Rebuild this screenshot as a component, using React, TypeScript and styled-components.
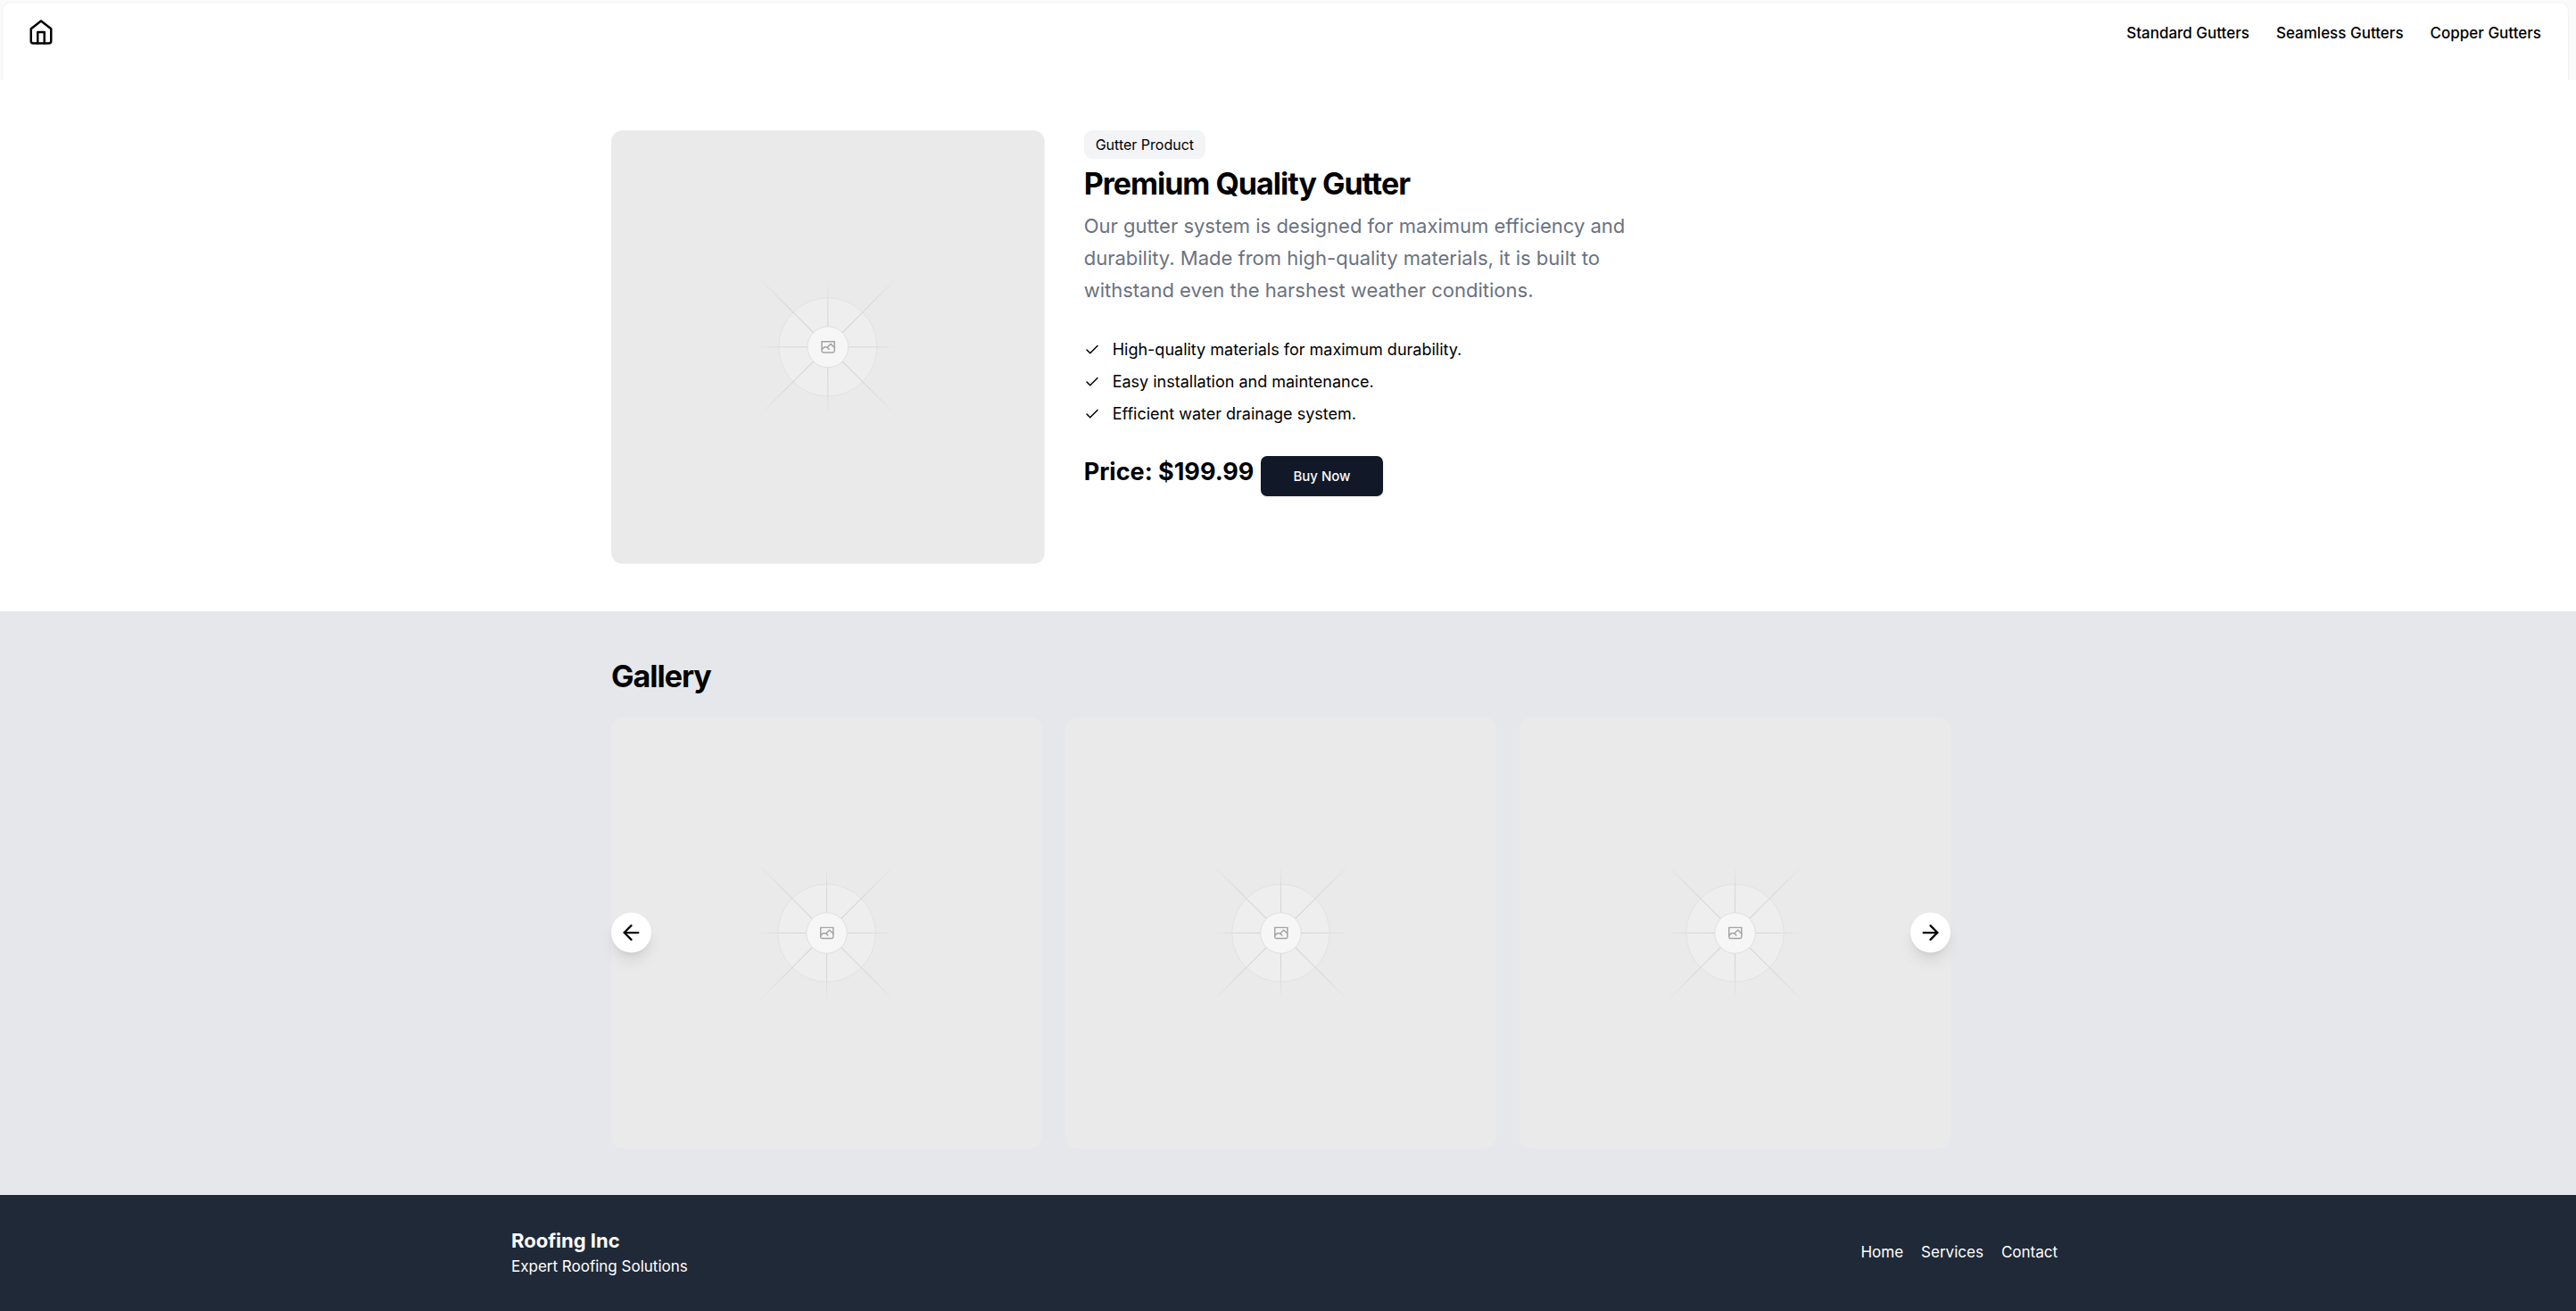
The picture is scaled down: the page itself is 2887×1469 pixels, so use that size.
import React, { useId } from "react";
import styled, { createGlobalStyle } from "styled-components";
import { ArrowLeft, ArrowRight, Check } from "lucide-react";

const GlobalStyle = createGlobalStyle`
  *, *::before, *::after { box-sizing: border-box; }
  body {
    margin: 0;
    background: #ffffff;
    color: #000000;
    font-family: Inter, "Liberation Sans", sans-serif;
    font-size: 18px;
    line-height: 27px;
  }
  h1, h2, h3, p, ul { margin: 0; padding: 0; }
  ul { list-style: none; }
  a { color: inherit; text-decoration: none; }
`;

const Header = styled.header`
  padding: 2px 8px 0 2px;
  background: #fafafa;
`;

const NavCard = styled.nav`
  display: flex;
  align-items: flex-start;
  justify-content: space-between;
  min-height: 88px;
  padding: 18px 30px 18px 28px;
  border: 1px solid #f1f1f1;
  border-bottom: 0;
  border-radius: 10px 10px 0 0;
  background: #ffffff;
`;

const HomeLink = styled.a`
  display: flex;
  svg { display: block; }
`;

const NavLinks = styled.div`
  display: flex;
  gap: 30px;
  padding-top: 3px;
  font-size: 17px;
  font-weight: 500;
`;

const Section = styled.section<{ $tinted?: boolean }>`
  padding: ${(p) => (p.$tinted ? "53px 16px 52px 0" : "56px 16px 53px 0")};
  background: ${(p) => (p.$tinted ? "#e5e7eb" : "#ffffff")};
`;

const Container = styled.div`
  max-width: 1501px;
  margin: 0 auto;
`;

const HeroGrid = styled(Container)`
  display: grid;
  grid-template-columns: 1fr 2fr;
  gap: 44px;
`;

const Picture = styled.svg`
  display: block;
  width: 100%;
  aspect-ratio: 1;
  border-radius: 13px;
`;

const Details = styled.div`
  display: flex;
  flex-direction: column;
  align-items: flex-start;
`;

const Badge = styled.span`
  padding: 4px 13px;
  border-radius: 9px;
  background: #f3f4f6;
  font-size: 16px;
  line-height: 24px;
`;

const Title = styled.h1`
  margin: 9px 0 11px;
  font-size: 34px;
  line-height: 37px;
  font-weight: 700;
  letter-spacing: -1px;
`;

const GalleryTitle = styled.h2`
  margin-bottom: 26px;
  font-size: 34px;
  line-height: 40px;
  font-weight: 700;
  letter-spacing: -1px;
`;

const Lead = styled.p`
  max-width: 667px;
  color: #6b7280;
  font-size: 22px;
  line-height: 36px;
`;

const Features = styled.ul`
  display: grid;
  gap: 9px;
  margin: 35px 0 34px;
`;

const Feature = styled.li`
  display: flex;
  align-items: center;
  gap: 14px;
`;

const Purchase = styled.div`
  display: flex;
  align-items: flex-start;
  gap: 8px;
`;

const Price = styled.p`
  font-size: 27px;
  line-height: 36px;
  font-weight: 700;
`;

const BuyButton = styled.button`
  height: 45px;
  padding: 0 36px;
  border: 0;
  border-radius: 7px;
  background: #111827;
  color: #f9fafb;
  box-shadow: 0 1px 2px rgba(0, 0, 0, 0.12);
  font: 500 15px/24px Inter, "Liberation Sans", sans-serif;
`;

const Carousel = styled.div`
  position: relative;
`;

const Slides = styled.div`
  display: grid;
  grid-template-columns: repeat(3, 1fr);
  gap: 26px;
`;

const ArrowButton = styled.button<{ $side: "left" | "right" }>`
  position: absolute;
  top: 50%;
  ${(p) => p.$side}: 0;
  display: grid;
  place-items: center;
  width: 45px;
  height: 45px;
  padding: 0;
  border: 0;
  border-radius: 50%;
  background: #ffffff;
  color: #000000;
  transform: translateY(-50%);
  box-shadow: 0 11px 17px -3px rgba(0, 0, 0, 0.1), 0 4px 7px -4px rgba(0, 0, 0, 0.1);
`;

const Footer = styled.footer`
  padding: 36px 8px 36px 0;
  background: #1f2937;
  color: #ffffff;
  font-size: 17px;
`;

const FooterRow = styled.div`
  display: flex;
  align-items: center;
  justify-content: space-between;
  max-width: 1733px;
  margin: 0 auto;
`;

const Company = styled.h3`
  font-size: 22px;
  line-height: 31px;
  font-weight: 700;
`;

const FooterLinks = styled.nav`
  display: flex;
  gap: 20px;
`;

const RAYS = [0, 45, 90, 135, 180, 225, 270, 315];

function Placeholder({ label }: { label: string }) {
  const id = useId();
  return (
    <Picture viewBox="0 0 1200 1200" role="img" aria-label={label}>
      <defs>
        <linearGradient id={`${id}s`} gradientUnits="userSpaceOnUse" x1="56" y1="0" x2="188" y2="0">
          <stop offset="0" stopColor="#c9c9c9" stopOpacity="0.75" />
          <stop offset="0.5" stopColor="#c9c9c9" stopOpacity="0.6" />
          <stop offset="1" stopColor="#c9c9c9" stopOpacity="0" />
        </linearGradient>
        <linearGradient id={`${id}l`} gradientUnits="userSpaceOnUse" x1="56" y1="0" x2="275" y2="0">
          <stop offset="0" stopColor="#c9c9c9" stopOpacity="0.75" />
          <stop offset="0.5" stopColor="#c9c9c9" stopOpacity="0.6" />
          <stop offset="1" stopColor="#c9c9c9" stopOpacity="0" />
        </linearGradient>
      </defs>
      <rect width="1200" height="1200" fill="#eaeaea" />
      <circle cx="600" cy="600" r="136" fill="#eeeeee" stroke="#e1e1e1" strokeWidth="2.4" />
      {RAYS.map((angle) => {
        const diagonal = angle % 90 !== 0;
        return (
          <rect
            key={angle}
            x="56"
            y="-1.2"
            width={diagonal ? 219 : 132}
            height="2.4"
            fill={`url(#${id}${diagonal ? "l" : "s"})`}
            transform={`translate(600 600) rotate(${angle})`}
          />
        );
      })}
      <circle cx="600" cy="600" r="56.6" fill="#f6f6f6" stroke="#dedede" strokeWidth="2.4" />
      <path
        fill="#a3a3a3"
        fillRule="evenodd"
        clipRule="evenodd"
        d="M616.426 586.58h-31.434v16.176l3.553-3.554.531-.531h9.068l.074-.074 8.463-8.463h2.565l7.18 7.181V586.58zm-15.715 14.654 3.698 3.699 1.283 1.282-2.565 2.565-1.282-1.283-5.2-5.199h-6.066l-5.514 5.514-.073.073v2.876a2.418 2.418 0 0 0 2.418 2.418h26.598a2.418 2.418 0 0 0 2.418-2.418v-8.317l-8.463-8.463-7.181 7.181-.071.072zm-19.347 5.442v4.085a6.045 6.045 0 0 0 6.046 6.045h26.598a6.044 6.044 0 0 0 6.045-6.045v-7.108l1.356-1.355-1.282-1.283-.074-.073v-17.989h-38.689v23.43l-.146.146.146.147z"
      />
    </Picture>
  );
}

const FEATURES = [
  "High-quality materials for maximum durability.",
  "Easy installation and maintenance.",
  "Efficient water drainage system.",
];

export default function App() {
  return (
    <>
      <GlobalStyle />
      <Header>
        <NavCard aria-label="Products">
          <HomeLink href="#" aria-label="Home">
            <svg
              width="30"
              height="30"
              viewBox="0 0 24 24"
              fill="none"
              stroke="currentColor"
              strokeWidth="2"
              strokeLinecap="round"
              strokeLinejoin="round"
            >
              <path d="m3 9 9-7 9 7v11a2 2 0 0 1-2 2H5a2 2 0 0 1-2-2z" />
              <polyline points="9 22 9 12 15 12 15 22" />
            </svg>
          </HomeLink>
          <NavLinks>
            <a href="#standard">Standard Gutters</a>
            <a href="#seamless">Seamless Gutters</a>
            <a href="#copper">Copper Gutters</a>
          </NavLinks>
        </NavCard>
      </Header>
      <main>
        <Section>
          <HeroGrid>
            <Placeholder label="Gutter product" />
            <Details>
              <Badge>Gutter Product</Badge>
              <Title>Premium Quality Gutter</Title>
              <Lead>
                Our gutter system is designed for maximum efficiency and durability. Made from
                high-quality materials, it is built to withstand even the harshest weather conditions.
              </Lead>
              <Features>
                {FEATURES.map((text) => (
                  <Feature key={text}>
                    <Check size={18} strokeWidth={2} aria-hidden />
                    {text}
                  </Feature>
                ))}
              </Features>
              <Purchase>
                <Price>Price: $199.99</Price>
                <BuyButton type="button">Buy Now</BuyButton>
              </Purchase>
            </Details>
          </HeroGrid>
        </Section>
        <Section $tinted>
          <Container>
            <GalleryTitle>Gallery</GalleryTitle>
            <Carousel>
              <Slides>
                <Placeholder label="Gallery image 1" />
                <Placeholder label="Gallery image 2" />
                <Placeholder label="Gallery image 3" />
              </Slides>
              <ArrowButton type="button" $side="left" aria-label="Previous">
                <ArrowLeft size={27} />
              </ArrowButton>
              <ArrowButton type="button" $side="right" aria-label="Next">
                <ArrowRight size={27} />
              </ArrowButton>
            </Carousel>
          </Container>
        </Section>
      </main>
      <Footer>
        <FooterRow>
          <div>
            <Company>Roofing Inc</Company>
            <p>Expert Roofing Solutions</p>
          </div>
          <FooterLinks aria-label="Footer">
            <a href="#home">Home</a>
            <a href="#services">Services</a>
            <a href="#contact">Contact</a>
          </FooterLinks>
        </FooterRow>
      </Footer>
    </>
  );
}
